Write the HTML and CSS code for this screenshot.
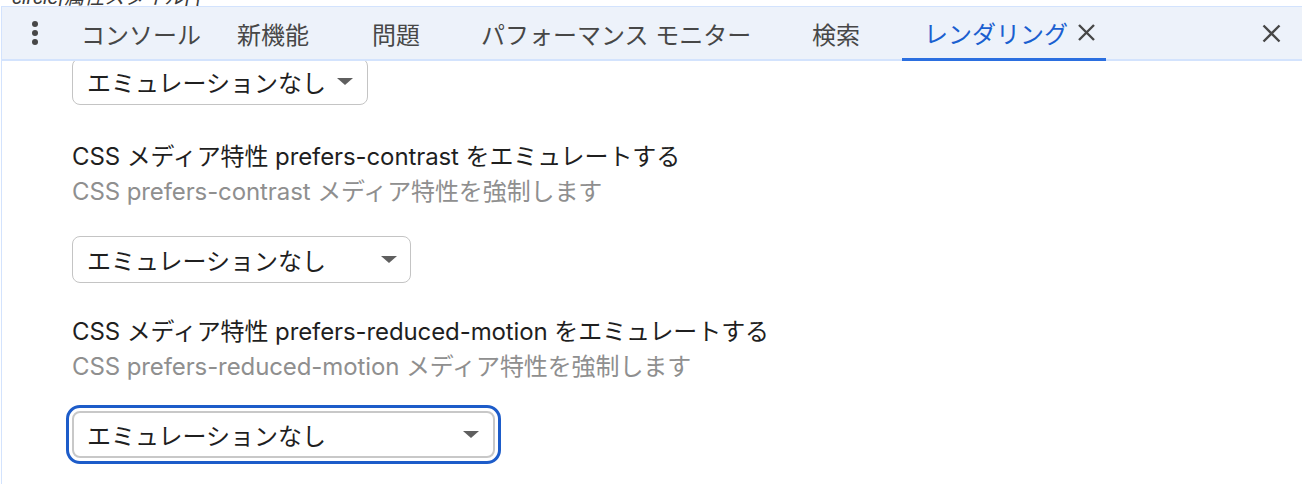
FILE: index.html
```html
<!DOCTYPE html>
<html lang="ja">
<head>
<meta charset="utf-8">
<title>レンダリング</title>
<link rel="stylesheet" href="styles.css">
</head>
<body>
<div class="strip"><span class="strip-text">circle[属性スタイル] {</span></div>
<div class="panel">
  <div class="tabbar">
    <div class="kebab"><span class="dot"></span><span class="dot"></span><span class="dot"></span></div>
    <div class="tab tab-console">コンソール</div>
    <div class="tab tab-new">新機能</div>
    <div class="tab tab-issues">問題</div>
    <div class="tab tab-perf">パフォーマンス モニター</div>
    <div class="tab tab-search">検索</div>
    <div class="tab tab-active">レンダリング
      <svg class="tab-close" width="19" height="19" viewBox="0 0 19 19"><path d="M2 2 L17 17 M17 2 L2 17" stroke="#474747" stroke-width="2.4" fill="none"/></svg>
    </div>
    <div class="spacer"></div>
    <svg class="close-all" width="19" height="19" viewBox="0 0 19 19"><path d="M1.5 1.5 L17.5 17.5 M17.5 1.5 L1.5 17.5" stroke="#474747" stroke-width="2.4" fill="none"/></svg>
  </div>
  <div class="content">
    <div class="select select-first"><span>エミュレーションなし</span><span class="arrow"></span></div>

    <div class="setting">
      <div class="title">CSS メディア特性 prefers-contrast をエミュレートする</div>
      <div class="subtitle">CSS prefers-contrast メディア特性を強制します</div>
      <div class="select select-mid"><span>エミュレーションなし</span><span class="arrow"></span></div>
    </div>

    <div class="setting">
      <div class="title">CSS メディア特性 prefers-reduced-motion をエミュレートする</div>
      <div class="subtitle">CSS prefers-reduced-motion メディア特性を強制します</div>
      <div class="select select-wide focused"><span>エミュレーションなし</span><span class="arrow"></span></div>
    </div>
  </div>
</div>
</body>
</html>
```
FILE: styles.css
```css
* { box-sizing: border-box; }
html, body {
  margin: 0;
  padding: 0;
  background: #ffffff;
  width: 1302px;
  height: 484px;
  overflow: hidden;
  font-family: "Liberation Sans", "Noto Sans CJK JP", sans-serif;
  color: #1f1f1f;
}
.strip {
  height: 6px;
  overflow: hidden;
  padding-left: 12px;
}
.strip-text {
  display: block;
  font-size: 20px;
  line-height: 20px;
  margin-top: -13px;
  color: #3c3c3c;
  font-style: italic;
}
.panel {
  margin-left: 1px;
  border-left: 1px solid #d3e3fd;
  height: 478px;
}
.tabbar {
  position: relative;
  z-index: 1;
  display: flex;
  align-items: stretch;
  height: 55px;
  background: #edf2fa;
  border-top: 1px solid #d3e3fd;
  border-bottom: 2px solid #d3e3fd;
  font-size: 24px;
  color: #474747;
}
.kebab {
  width: 59px;
  padding-left: 30px;
  display: flex;
  flex-direction: column;
  justify-content: center;
  gap: 3px;
}
.dot {
  width: 6px;
  height: 6px;
  border-radius: 50%;
  background: #474747;
}
.tab {
  display: flex;
  align-items: center;
  padding-left: 20px;
  white-space: nowrap;
  flex: none;
}
.tab-console { width: 156px; }
.tab-new { width: 135px; }
.tab-issues { width: 109px; }
.tab-perf { width: 331px; }
.tab-search { width: 110px; }
.tab-active {
  width: 204px;
  padding-left: 22px;
  color: #1a5fd0;
  margin-bottom: -2px;
  border-bottom: 3px solid #2b6fe0;
}
.tab-close { margin-left: 9px; flex: none; }
.spacer { flex: 1; }
.close-all { align-self: center; margin-right: 21px; flex: none; }

.content {
  padding-left: 70px;
  font-size: 24px;
}
.select {
  display: flex;
  align-items: center;
  justify-content: space-between;
  height: 47px;
  padding: 0 14px;
  border: 1px solid #c4c4c4;
  border-radius: 8px;
  color: #1f1f1f;
  background: #ffffff;
  font-size: 24px;
  white-space: nowrap;
}
.select-first { width: 296px; margin-top: -3px; }
.select-mid { width: 339px; padding-right: 13px; }
.select-wide { width: 423px; }
.focused {
  border: 2px solid #c8c8c8;
  padding-left: 13px;
  outline: 3.5px solid #1d5cc9;
  outline-offset: 3px;
}
.arrow {
  width: 0;
  height: 0;
  border-left: 8px solid transparent;
  border-right: 8px solid transparent;
  border-top: 7px solid #5f5f5f;
}
.setting { margin-top: 34px; }
.setting + .setting { margin-top: 31px; }
.title {
  line-height: 35px;
  color: #1f1f1f;
  font-family: "Inter", "Noto Sans CJK JP", sans-serif;
  letter-spacing: -0.1px;
}
.subtitle {
  line-height: 36px;
  color: #8f8f8f;
  font-family: "Inter", "Noto Sans CJK JP", sans-serif;
  letter-spacing: -0.1px;
}
.setting .select { margin-top: 26px; }
```
